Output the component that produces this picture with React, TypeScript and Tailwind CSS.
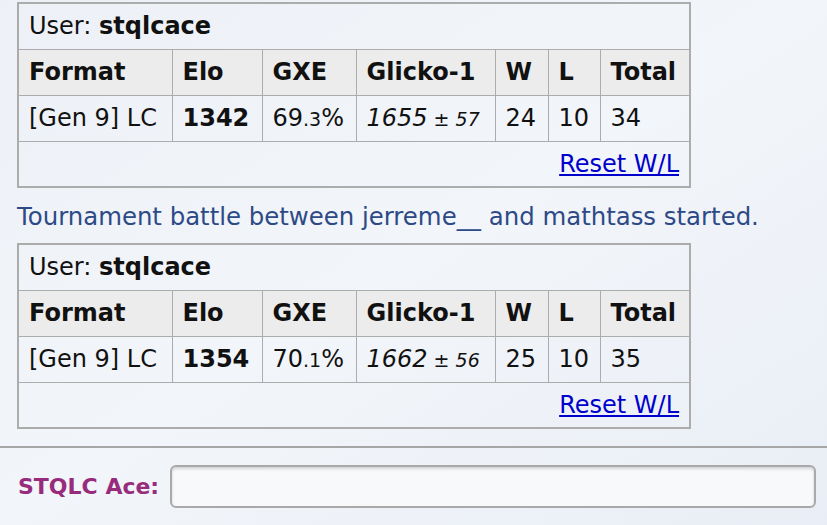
import React from 'react';

interface Rank {
  format: string;
  elo: number;
  gxeInt: string;
  gxeDec: string;
  glicko: number;
  dev: number;
  w: number;
  l: number;
}

const RANKS: Rank[] = [
  { format: '[Gen 9] LC', elo: 1342, gxeInt: '69', gxeDec: '.3', glicko: 1655, dev: 57, w: 24, l: 10 },
  { format: '[Gen 9] LC', elo: 1354, gxeInt: '70', gxeDec: '.1', glicko: 1662, dev: 56, w: 25, l: 10 },
];

const th = 'border border-[#acacac] bg-[#ececec] text-left font-bold px-[10px] h-[46px] whitespace-nowrap';
const td = 'border border-[#acacac] text-left font-normal px-[10px] h-[46px] whitespace-nowrap';

const RankTable: React.FC<{ r: Rank }> = ({ r }) => (
  <table className="table-fixed border-collapse border-2 border-[#acacac] w-[672px]">
    <colgroup>
      <col className="w-[154px]" />
      <col className="w-[90px]" />
      <col className="w-[94px]" />
      <col className="w-[139px]" />
      <col className="w-[53px]" />
      <col className="w-[52px]" />
      <col className="w-[90px]" />
    </colgroup>
    <tbody>
      <tr>
        <td colSpan={7} className={td}>
          User: <strong>stqlcace</strong>
        </td>
      </tr>
      <tr>
        <th className={th}>Format</th>
        <th className={th}>Elo</th>
        <th className={th}>GXE</th>
        <th className={th}>Glicko-1</th>
        <th className={th}>W</th>
        <th className={th}>L</th>
        <th className={th}>Total</th>
      </tr>
      <tr>
        <td className={td}>{r.format}</td>
        <td className={td}><strong>{r.elo}</strong></td>
        <td className={td}>
          {r.gxeInt}<small className="text-[19px]">{r.gxeDec}</small>%
        </td>
        <td className={td}>
          <em>{r.glicko}<small className="text-[19px]"> ± {r.dev}</small></em>
        </td>
        <td className={td}>{r.w}</td>
        <td className={td}>{r.l}</td>
        <td className={td}>{r.w + r.l}</td>
      </tr>
      <tr>
        <td colSpan={7} className={td + ' text-right'}>
          <a href="#" className="text-[#0000cc] underline">Reset W/L</a>
        </td>
      </tr>
    </tbody>
  </table>
);

export default function App() {
  return (
    <div className="w-[827px] h-[525px] overflow-hidden bg-gradient-to-br from-[#edf1f7] via-[#f2f5f9] to-[#e9eef6] text-[#111] text-[24px] font-['DejaVu_Sans','Verdana',sans-serif]">
      <div className="pl-[17px] pt-[2px]">
        <RankTable r={RANKS[0]} />
        <div className="text-[#2d4a87] text-[24.4px] leading-[30px] pt-[14px] pb-[11px]">
          Tournament battle between jerreme__ and mathtass started.
        </div>
        <RankTable r={RANKS[1]} />
      </div>
      <div className="mt-[17px] border-t-2 border-[#a6a6a6] flex items-center gap-[11px] pl-[18px] pr-[11px] pt-[17px]">
        <span className="text-[#972c7c] font-bold text-[22px] whitespace-nowrap">STQLC Ace:</span>
        <input
          type="text"
          className="flex-1 h-[43px] rounded-[6px] border-2 border-[#a9a9a9] bg-[#f8f9fb] shadow-[inset_0_2px_3px_rgba(0,0,0,0.15)] outline-none"
        />
      </div>
    </div>
  );
}
